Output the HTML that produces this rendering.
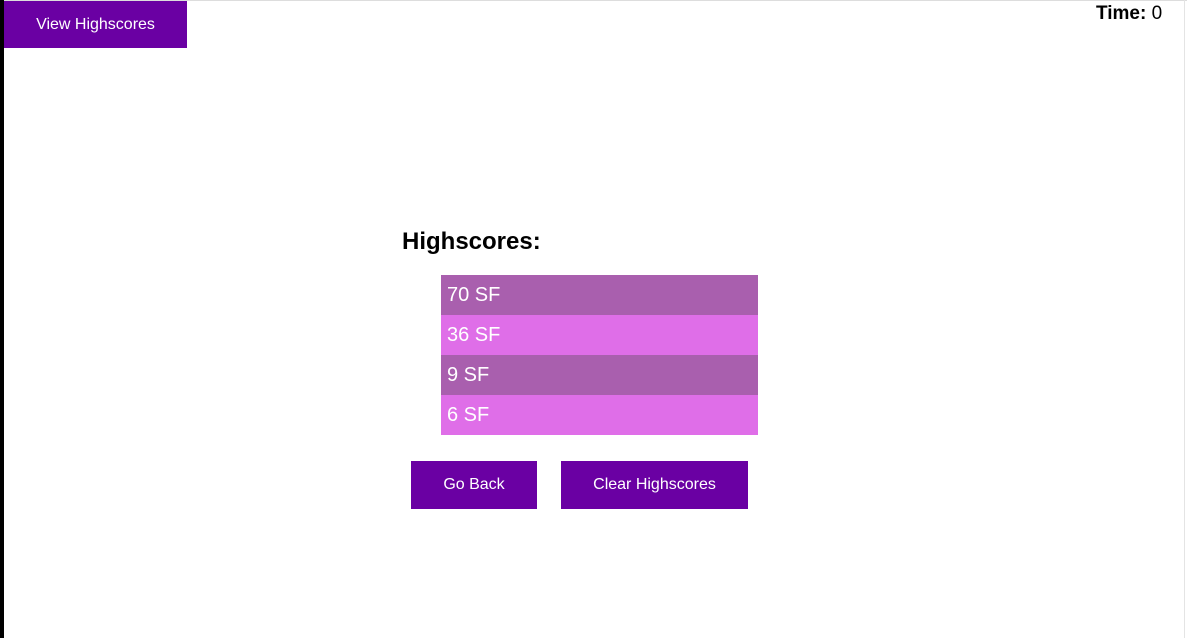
<!DOCTYPE html>
<html><head><meta charset="utf-8"><style>
body{margin:0;width:1187px;height:638px;overflow:hidden;background:#fff;font-family:"Liberation Sans",Arial,sans-serif;position:relative}
.a{position:absolute}
.btn{position:absolute;background:#6a00a3;color:#fff;font-size:16px;display:flex;align-items:center;justify-content:center}
.row{position:absolute;left:441px;width:317px;height:40px;color:#fff;font-size:20px;line-height:41px;padding-left:6px;box-sizing:border-box}
</style></head><body>
<div class="a" style="left:0;top:0;width:4px;height:638px;background:#000"></div>
<div class="a" style="left:4px;top:0;width:1183px;height:1px;background:#ddd"></div>
<div class="a" style="left:1184px;top:0;width:1px;height:638px;background:#e4e4e4"></div>
<div class="btn" style="left:4px;top:1px;width:183px;height:47px">View Highscores</div>
<div class="a" style="left:1096px;top:3px;font-size:19px"><b>Time:</b> 0</div>
<div class="a" style="left:402px;top:228px;font-size:24px;font-weight:bold">Highscores:</div>
<div class="row" style="top:275px;background:#a95fae">70 SF</div>
<div class="row" style="top:315px;background:#df6ee8">36 SF</div>
<div class="row" style="top:355px;background:#a95fae">9 SF</div>
<div class="row" style="top:395px;background:#df6ee8">6 SF</div>
<div class="btn" style="left:411px;top:461px;width:126px;height:48px">Go Back</div>
<div class="btn" style="left:561px;top:461px;width:187px;height:48px">Clear Highscores</div>
</body></html>
